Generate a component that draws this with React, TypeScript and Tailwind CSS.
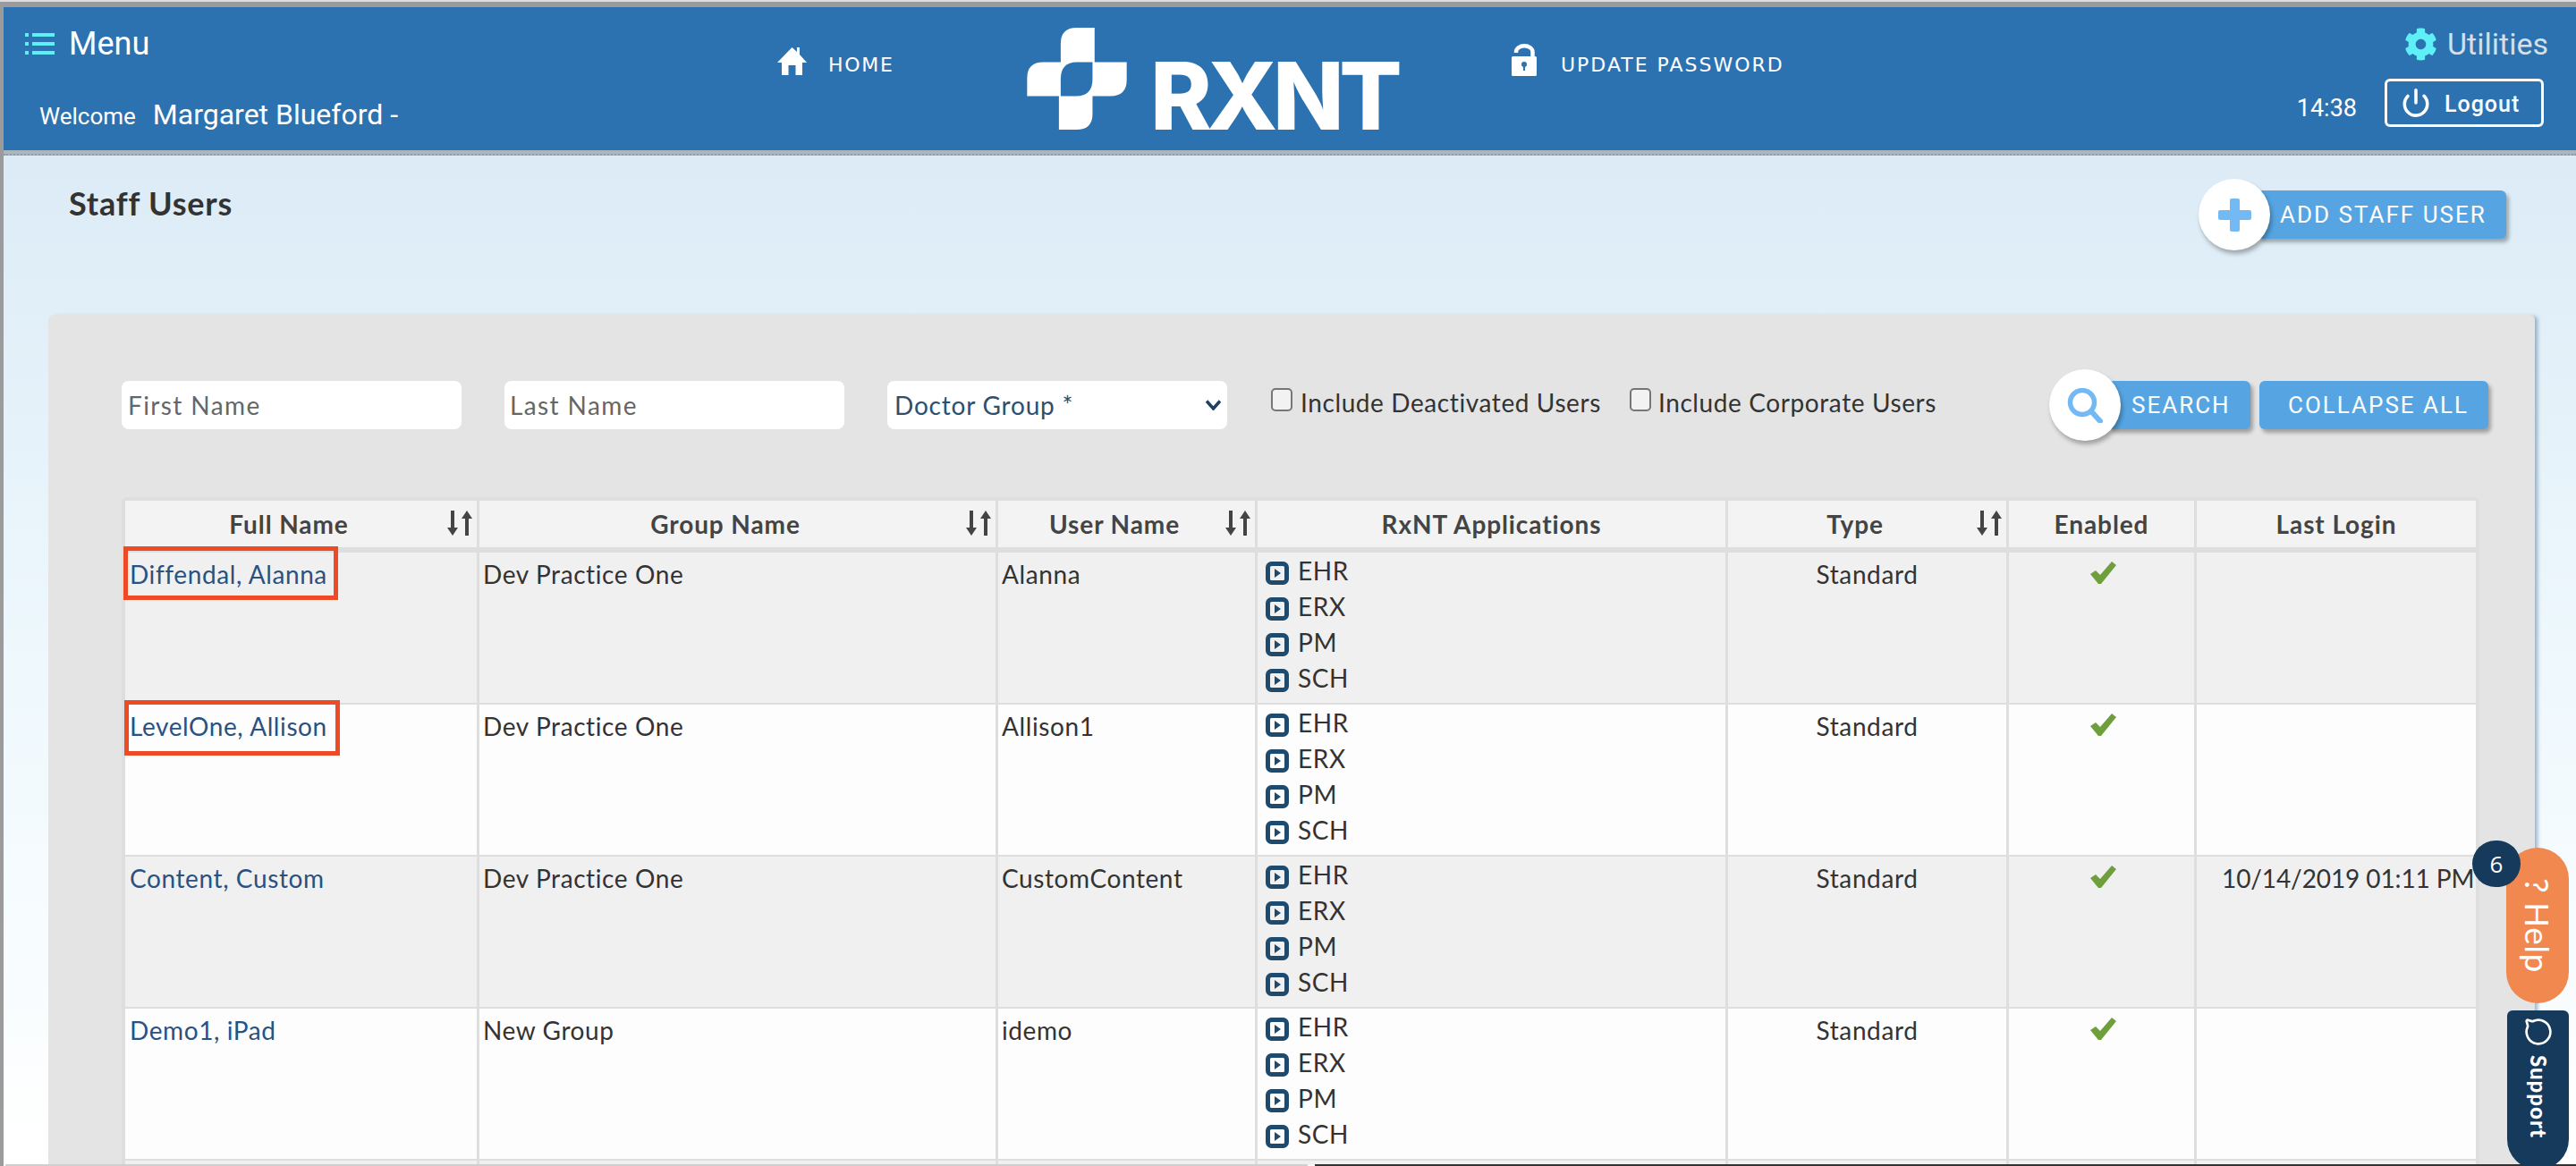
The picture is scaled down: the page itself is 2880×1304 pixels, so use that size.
import { FaCog } from 'react-icons/fa'
import { MessageCircle, Power } from 'lucide-react'

const body = "font-['Lato','Liberation_Sans',sans-serif]"
const head = "font-['Roboto','Liberation_Sans',sans-serif]"

const columns = [
  { label: 'Full Name', width: 'w-[396px]', sort: true },
  { label: 'Group Name', width: 'w-[580px]', sort: true },
  { label: 'User Name', width: 'w-[290px]', sort: true },
  { label: 'RxNT Applications', width: 'w-[526px]', sort: false },
  { label: 'Type', width: 'w-[314px]', sort: true },
  { label: 'Enabled', width: 'w-[210px]', sort: false },
  { label: 'Last Login', width: 'w-[312px]', sort: false },
]

const rows = [
  { name: 'Diffendal, Alanna', group: 'Dev Practice One', user: 'Alanna', login: '', mark: 'left-[-2px] top-[-7px] w-[240px] h-[60px]' },
  { name: 'LevelOne, Allison', group: 'Dev Practice One', user: 'Allison1', login: '', mark: 'left-[-1px] top-[-5px] w-[241px] h-[62px]' },
  { name: 'Content, Custom', group: 'Dev Practice One', user: 'CustomContent', login: '10/14/2019 01:11 PM', mark: '' },
  { name: 'Demo1, iPad', group: 'New Group', user: 'idemo', login: '', mark: '' },
]

const apps = ['EHR', 'ERX', 'PM', 'SCH']

function MenuIcon() {
  return (
    <svg width="33" height="26" viewBox="0 0 33 26" fill="#5ef0f6">
      <rect x="0" y="1" width="4" height="4" />
      <rect x="8" y="1" width="25" height="4" />
      <rect x="0" y="11" width="4" height="4" />
      <rect x="8" y="11" width="25" height="4" />
      <rect x="0" y="21" width="4" height="4" />
      <rect x="8" y="21" width="25" height="4" />
    </svg>
  )
}

function HomeIcon() {
  return (
    <svg width="33" height="31" viewBox="0 0 33 31" fill="#fff">
      <path d="M16.5 0 L22 5 V0 H25 V8 L33 17 H28 V31 H20.5 V20 H12.5 V31 H5 V17 H0 Z" />
    </svg>
  )
}

function LockIcon() {
  return (
    <svg width="28" height="36" viewBox="0 0 28 36">
      <path d="M5 10 V9 A9 6.5 0 0 1 23.5 9 V15" fill="none" stroke="#fff" strokeWidth="4.5" />
      <rect x="0" y="14" width="28" height="22" rx="1.5" fill="#fff" />
      <circle cx="14" cy="23" r="3" fill="#2d72b0" />
      <rect x="13" y="24" width="2" height="6" fill="#2d72b0" />
    </svg>
  )
}

function Logo() {
  return (
    <svg width="112" height="114" viewBox="145 32 335 343">
      <path
        fill="#fff"
        d="M258 148 V85 Q258 32 312 32 H372 V148 H480 V208 Q480 262 425 262 H365 V322 Q365 375 310 375 H252 V262 H145 V202 Q145 148 200 148 Z"
      />
      <path fill="#2d72b0" d="M365 148 H312 Q258 148 258 205 V262 H310 Q365 262 365 205 Z" />
    </svg>
  )
}

function PlusIcon() {
  return (
    <svg width="37" height="37" viewBox="0 0 37 37" fill="#73baf5">
      <rect x="13" y="0" width="11" height="37" rx="2" />
      <rect x="0" y="13" width="37" height="11" rx="2" />
    </svg>
  )
}

function SearchIcon() {
  return (
    <svg width="41" height="39" viewBox="0 0 41 39" fill="none" stroke="#73baf5">
      <circle cx="17" cy="16" r="13.5" strokeWidth="5.5" />
      <path d="M27 26 L37 37" strokeWidth="6" strokeLinecap="round" />
    </svg>
  )
}

function SortIcon() {
  return (
    <svg className="shrink-0 mr-[5px] mb-[3px]" width="28" height="28" viewBox="0 0 28 28" fill="#444">
      <rect x="4" y="0" width="4" height="20" />
      <path d="M0 19 H12 L6 28 Z" />
      <rect x="20" y="8" width="4" height="20" />
      <path d="M16 9 H28 L22 0 Z" />
    </svg>
  )
}

function AppIcon() {
  return (
    <svg className="shrink-0 mt-[10px]" width="26" height="26" viewBox="0 0 26 26">
      <rect x="2.5" y="2.5" width="21" height="21" rx="4" fill="none" stroke="#1e4a6d" strokeWidth="5" />
      <path d="M10 8 L17 13 L10 18 Z" fill="#1e4a6d" />
    </svg>
  )
}

function CheckMark() {
  return (
    <svg className="mx-auto mt-[10px] translate-x-[2px]" width="29" height="25" viewBox="0 0 29 25" fill="#6f9e3c">
      <path d="M0 14 L6 10 L11 15 L24 0 L29 4 L12 25 H9 Z" />
    </svg>
  )
}

export default function App() {
  return (
    <div className={`relative w-[2880px] h-[1304px] overflow-hidden bg-white flex flex-col ${body}`}>
      <div className="h-[2px] bg-[#dddde2]" />
      <div className="h-[6px] bg-[#9b9b9b]" />

      <div className="flex-1 flex flex-col min-h-0 border-l-[4px] border-[#9b9b9b]">
        <header className={`h-[160px] shrink-0 bg-[#2d72b0] text-white flex ${head}`}>
          <div className="w-[865px] pl-[24px]">
            <div className="flex items-center h-[44px] mt-[19px]">
              <MenuIcon />
              <span className="ml-[16px] text-[36px] leading-[44px]">Menu</span>
            </div>
            <div className="flex items-baseline ml-[16px] mt-[37px]">
              <span className="text-[26px] leading-[40px]">Welcome</span>
              <span className="ml-[19px] text-[32px] leading-[40px]">Margaret Blueford -</span>
            </div>
          </div>

          <div className="w-[279px] flex items-start pt-[45px]">
            <HomeIcon />
            <span className="ml-[24px] mt-[4px] font-['DejaVu_Sans',sans-serif] text-[22px] leading-[32px] tracking-[1.7px]">HOME</span>
          </div>

          <div className="w-[542px] flex items-start pt-[23px]">
            <Logo />
            <span className="ml-[26px] mt-[38px] font-['Inter',sans-serif] font-extrabold text-[104px] leading-[76px] tracking-[-5.5px]">RXNT</span>
          </div>

          <div className="flex-1 flex items-start pt-[41px]">
            <LockIcon />
            <span className="ml-[27px] mt-[8px] font-['DejaVu_Sans',sans-serif] text-[22px] leading-[32px] tracking-[2px]">UPDATE PASSWORD</span>
          </div>

          <div className="pr-[31px] flex flex-col items-end">
            <div className="flex items-center h-[44px] mt-[19px] text-[#d5dfe8]">
              <FaCog className="w-[37px] h-[37px] text-[#5ef0f6]" />
              <span className="ml-[11px] text-[34px] leading-[44px]">Utilities</span>
            </div>
            <div className="flex items-center mt-[17px] mr-[5px]">
              <span className="text-[27px] mt-[12px]">14:38</span>
              <div className="ml-[31px] w-[178px] h-[54px] border-[3px] border-white rounded-[6px] flex items-center pl-[15px]">
                <Power className="w-[34px] h-[34px]" strokeWidth={2.5} />
                <span className="ml-[15px] text-[25px] font-medium tracking-[1px] mt-[3px]">Logout</span>
              </div>
            </div>
          </div>
        </header>

        <div className="h-[6px] shrink-0 bg-[#a9b6be] border-b-2 border-dotted border-[#8f9aa2]" />

        <main className="flex-1 min-h-0 flex flex-col bg-linear-to-b from-[#dcebf6] via-[#eef8fd] to-white">
          <div className="h-[178px] shrink-0 flex items-start justify-between pl-[73px] pr-[78px]">
            <h1 className="mt-[31px] text-[36px] leading-[44px] font-bold tracking-[0.8px] text-[#333]">Staff Users</h1>
            <div className={`flex items-center mt-[26px] ${head}`}>
              <div className="relative z-10 w-[80px] h-[80px] rounded-full bg-white shadow-[2px_4px_5px_rgba(0,0,0,0.3)] flex items-center justify-center">
                <PlusIcon />
              </div>
              <button className="-ml-[14px] h-[54px] w-[278px] pl-[25px] text-left bg-[#56a5e2] text-white rounded-[6px] shadow-[3px_4px_4px_rgba(0,0,0,0.3)] text-[26px] tracking-[2px]">
                ADD STAFF USER
              </button>
            </div>
          </div>

          <section className="flex-1 min-h-0 overflow-hidden ml-[50px] mr-[46px] bg-[#e4e4e4] rounded-t-[6px] shadow-[5px_0_4px_-2px_rgba(100,130,160,0.6)]">
            <div className="flex items-center h-[54px] mt-[74px] pl-[82px] pr-[52px]">
              <input
                placeholder="First Name"
                className="w-[380px] h-[54px] rounded-[8px] bg-white px-[7px] text-[28px] tracking-[1.4px] placeholder:text-[#666]"
              />
              <input
                placeholder="Last Name"
                className="ml-[48px] w-[380px] h-[54px] rounded-[8px] bg-white px-[6px] text-[28px] tracking-[1.4px] placeholder:text-[#666]"
              />
              <div className="relative ml-[48px] w-[380px] h-[54px]">
                <select className="appearance-none w-full h-full rounded-[8px] bg-white pl-[8px] text-[28px] tracking-[0.8px] text-[#2d4f70]">
                  <option>Doctor Group *</option>
                </select>
                <svg className="absolute right-[7px] top-[21px]" width="17" height="12" viewBox="0 0 17 12" fill="none" stroke="#1f4060" strokeWidth="3.5">
                  <path d="M1 1.5 L8.5 10 L16 1.5" />
                </svg>
              </div>
              <label className="ml-[49px] flex items-start h-[54px] pt-[8px] text-[28px] leading-[32px] text-[#333] tracking-[0.6px]">
                <input type="checkbox" className="appearance-none w-[24px] h-[26px] rounded-[5px] border-2 border-[#767676] bg-[#f2f2f2]" />
                <span className="ml-[9px]">Include Deactivated Users</span>
              </label>
              <label className="ml-[32px] flex items-start h-[54px] pt-[8px] text-[28px] leading-[32px] text-[#333] tracking-[0.6px]">
                <input type="checkbox" className="appearance-none w-[24px] h-[26px] rounded-[5px] border-2 border-[#767676] bg-[#f2f2f2]" />
                <span className="ml-[8px]">Include Corporate Users</span>
              </label>

              <div className={`ml-auto flex items-center text-white text-[26px] tracking-[2px] ${head}`}>
                <div className="relative z-10 w-[80px] h-[80px] rounded-full bg-white shadow-[2px_4px_5px_rgba(0,0,0,0.3)] flex items-center justify-center">
                  <SearchIcon />
                </div>
                <button className="-ml-[14px] w-[159px] h-[54px] pl-[26px] text-left bg-[#56a5e2] rounded-[6px] shadow-[3px_4px_4px_rgba(0,0,0,0.3)]">
                  SEARCH
                </button>
                <button className="ml-[10px] w-[256px] h-[54px] pl-[32px] text-left bg-[#56a5e2] rounded-[6px] shadow-[3px_4px_4px_rgba(0,0,0,0.3)]">
                  COLLAPSE ALL
                </button>
              </div>
            </div>

            <div className="mt-[76px] ml-[82px] w-[2636px] border-[4px] border-b-0 border-[#dedede] rounded-t-[6px]">
              <table className="w-[2628px] table-fixed border-separate border-spacing-0 text-[28px] text-[#333]">
                <thead>
                  <tr>
                    {columns.map((col) => (
                      <th
                        key={col.label}
                        className={`${col.width} h-[58px] p-0 bg-[#f3f3f3] border-b-[6px] border-r-[3px] border-[#dedede] last:border-r-0 font-bold text-[#444]`}
                      >
                        <div className="flex items-center">
                          <span className={`flex-1 text-center tracking-[0.9px] ${col.sort ? 'pl-[6px]' : ''}`}>{col.label}</span>
                          {col.sort && <SortIcon />}
                        </div>
                      </th>
                    ))}
                  </tr>
                </thead>
                <tbody>
                  {rows.map((row, i) => {
                    const bg = i % 2 === 0 ? 'bg-[#f0f0f0]' : 'bg-[#fdfdfd]'
                    const cell = `h-[170px] p-0 align-top border-b-2 border-r-[3px] border-[#dedede] last:border-r-0 ${bg}`
                    return (
                      <tr key={row.name}>
                        <td className={`${cell} relative`}>
                          <a className="block pl-[5px] pt-[4px] leading-[40px] text-[#2a5180] tracking-[0.6px]">{row.name}</a>
                          {row.mark && <div className={`absolute border-[5px] border-[#ee4a26] ${row.mark}`} />}
                        </td>
                        <td className={cell}>
                          <div className="pl-[4px] pt-[4px] leading-[40px] tracking-[0.6px]">{row.group}</div>
                        </td>
                        <td className={cell}>
                          <div className="pl-[4px] pt-[4px] leading-[40px] tracking-[0.6px]">{row.user}</div>
                        </td>
                        <td className={cell}>
                          <ul className="pl-[9px]">
                            {apps.map((app) => (
                              <li key={app} className="flex h-[40px] items-start">
                                <AppIcon />
                                <span className="ml-[10px] leading-[40px] tracking-[0.6px]">{app}</span>
                              </li>
                            ))}
                          </ul>
                        </td>
                        <td className={cell}>
                          <div className="pt-[4px] leading-[40px] text-center tracking-[0.6px]">Standard</div>
                        </td>
                        <td className={cell}>
                          <CheckMark />
                        </td>
                        <td className={cell}>
                          <div className="pl-[28px] pt-[4px] leading-[40px] whitespace-nowrap tracking-[-0.1px]">{row.login}</div>
                        </td>
                      </tr>
                    )
                  })}
                  <tr>
                    {columns.map((col) => (
                      <td key={col.label} className="h-[10px] p-0 bg-[#f0f0f0] border-r-[3px] border-[#dedede] last:border-r-0" />
                    ))}
                  </tr>
                </tbody>
              </table>
            </div>
          </section>
        </main>

        <div className="h-[2px] shrink-0 flex ml-[2px]">
          <div className="w-[1456px] bg-[#cfcfcf]" />
          <div className="w-[8px]" />
          <div className="flex-1 bg-[#333]" />
        </div>
      </div>

      {/* help + support tabs float over the page */}
      <div className="absolute left-[2802px] top-[948px] w-[70px] h-[174px] rounded-full bg-[#f08850] text-white flex items-center justify-center">
        <span className="[writing-mode:vertical-rl] text-[37px] leading-[40px] tracking-[0.5px]">? Help</span>
      </div>
      <div className="absolute left-[2764px] top-[940px] w-[54px] h-[52px] rounded-full bg-[#163a5c] text-white text-[26px] flex items-center justify-center font-['Open_Sans',sans-serif]">
        6
      </div>
      <div className="absolute left-[2803px] top-[1130px] w-[69px] h-[178px] rounded-t-[6px] rounded-b-[34px] bg-[#163a5c] text-white flex flex-col items-center pt-[8px]">
        <MessageCircle className="w-[32px] h-[32px] rotate-90" strokeWidth={2} />
        <span className="mt-[10px] [writing-mode:vertical-rl] text-[24px] leading-[28px] font-black tracking-[1px]">Support</span>
      </div>
    </div>
  )
}
